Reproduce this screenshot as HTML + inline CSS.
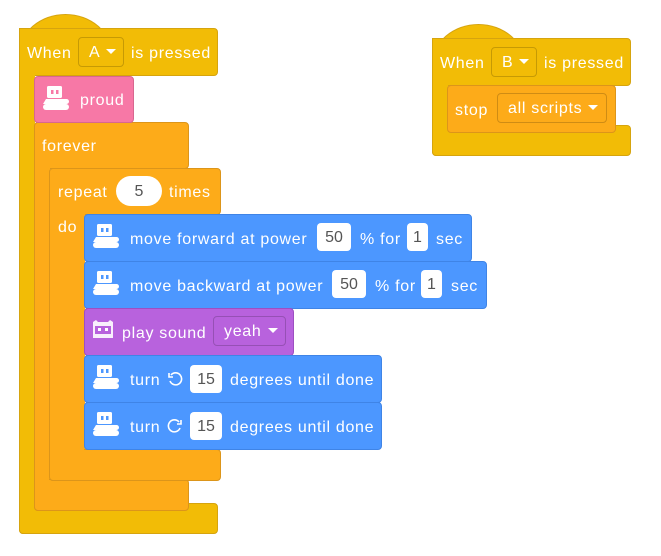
<!DOCTYPE html>
<html><head><meta charset="utf-8"><style>
body{margin:0;width:661px;height:556px;background:#fff;position:relative;overflow:hidden;font-family:"Liberation Sans",sans-serif;}
.b{position:absolute;box-sizing:border-box;border-radius:4px;color:#fff;font-size:15px;}
.y{background:#f2bc06;border:1px solid #d6a40e;}
.o{background:#fdab19;border:1px solid #dc951a;}
.bl{background:#4c97ff;border:1px solid #3f84e6;}
.pk{background:#f778a6;border:1px solid #d8678f;}
.pu{background:#b862dd;border:1px solid #9d4fc2;}
.t{position:absolute;white-space:nowrap;color:#fff;font-size:16px;letter-spacing:0.7px;line-height:18px;margin-top:2px;}
.in{position:absolute;background:#fff;border-radius:4px;color:#555;font-size:16px;text-align:center;line-height:30px;height:28px;}
.dd{position:absolute;border:1px solid rgba(0,0,0,.18);border-radius:4px;color:#fff;font-size:16px;letter-spacing:0.7px;line-height:30px;height:30px;box-sizing:border-box;padding-left:10px;white-space:nowrap;}
.ar{display:inline-block;width:0;height:0;border-left:5px solid transparent;border-right:5px solid transparent;border-top:5px solid #fff;vertical-align:middle;margin-left:6px;margin-top:-3px;}
svg.r{position:absolute;}
.dome{border-radius:50% 50% 0 0 / 100% 100% 0 0 !important;border-bottom:none;}
</style></head><body>

<!-- Hat A -->
<div class="b y dome" style="left:19px;top:14px;width:93px;height:40px"></div>
<div class="b y" style="left:19px;top:28px;width:199px;height:48px;border-top-left-radius:0"></div>
<div class="b y" style="left:19px;top:60px;width:16px;height:474px;border-radius:0 0 0 4px;border-top:none;border-right:none"></div>
<div class="b y" style="left:19px;top:503px;width:199px;height:31px;border-top-left-radius:0"></div>
<div class="b y" style="left:20px;top:30px;width:14px;height:490px;border:none;border-radius:0"></div>
<div class="t" style="left:27px;top:43px">When</div>
<div class="dd" style="left:78px;top:37px;width:46px">A<span class="ar"></span></div>
<div class="t" style="left:131px;top:43px">is pressed</div>

<!-- forever -->
<div class="b o" style="left:34px;top:122px;width:155px;height:47px"></div>
<div class="b o" style="left:34px;top:150px;width:16px;height:361px;border-radius:0 0 0 4px;border-top:none;border-right:none"></div>
<div class="b o" style="left:34px;top:479px;width:155px;height:32px;border-top-left-radius:0"></div>
<div class="b o" style="left:35px;top:140px;width:14px;height:350px;border:none;border-radius:0"></div>
<div class="t" style="left:42px;top:136px">forever</div>

<!-- proud -->
<div class="b pk" style="left:34px;top:76px;width:100px;height:47px"></div>
<svg class="r" style="left:41px;top:85px" width="30" height="28" viewBox="0 0 30 28"><rect x="6" y="1" width="15" height="12" rx="1.5" fill="#fff"/><rect x="10" y="5" width="2.5" height="4" fill="#f778a6"/><rect x="15" y="5" width="2.5" height="4" fill="#f778a6"/><path d="M5 14h17v5H2z" fill="#fff"/><rect x="2" y="19" width="26" height="6" rx="3" fill="#fff"/><rect x="14" y="14" width="14" height="5" rx="2.5" fill="#fff"/></svg>
<div class="t" style="left:80px;top:90px">proud</div>

<!-- repeat -->
<div class="b o" style="left:49px;top:168px;width:172px;height:47px"></div>
<div class="b o" style="left:49px;top:200px;width:36px;height:281px;border-radius:0 0 0 4px;border-top:none;border-right:none"></div>
<div class="b o" style="left:49px;top:449px;width:172px;height:32px;border-top-left-radius:0"></div>
<div class="b o" style="left:50px;top:205px;width:34px;height:250px;border:none;border-radius:0"></div>
<div class="t" style="left:58px;top:182px">repeat</div>
<div class="in" style="left:116px;top:176px;width:46px;height:30px;border-radius:15px;line-height:31px">5</div>
<div class="t" style="left:169px;top:182px">times</div>
<div class="t" style="left:58px;top:217px">do</div>

<!-- move forward -->
<div class="b bl" style="left:84px;top:214px;width:388px;height:48px"></div>
<svg class="r" style="left:91px;top:223px" width="30" height="28" viewBox="0 0 30 28"><rect x="6" y="1" width="15" height="12" rx="1.5" fill="#fff"/><rect x="10" y="5" width="2.5" height="4" fill="#4c97ff"/><rect x="15" y="5" width="2.5" height="4" fill="#4c97ff"/><path d="M5 14h17v5H2z" fill="#fff"/><rect x="2" y="19" width="26" height="6" rx="3" fill="#fff"/><rect x="14" y="14" width="14" height="5" rx="2.5" fill="#fff"/></svg>
<div class="t" style="left:130px;top:229px">move forward at power</div>
<div class="in" style="left:317px;top:223px;width:34px">50</div>
<div class="t" style="left:360px;top:229px">% for</div>
<div class="in" style="left:407px;top:223px;width:21px">1</div>
<div class="t" style="left:436px;top:229px">sec</div>

<!-- move backward -->
<div class="b bl" style="left:84px;top:261px;width:403px;height:48px"></div>
<svg class="r" style="left:91px;top:270px" width="30" height="28" viewBox="0 0 30 28"><rect x="6" y="1" width="15" height="12" rx="1.5" fill="#fff"/><rect x="10" y="5" width="2.5" height="4" fill="#4c97ff"/><rect x="15" y="5" width="2.5" height="4" fill="#4c97ff"/><path d="M5 14h17v5H2z" fill="#fff"/><rect x="2" y="19" width="26" height="6" rx="3" fill="#fff"/><rect x="14" y="14" width="14" height="5" rx="2.5" fill="#fff"/></svg>
<div class="t" style="left:130px;top:276px">move backward at power</div>
<div class="in" style="left:332px;top:270px;width:34px">50</div>
<div class="t" style="left:375px;top:276px">% for</div>
<div class="in" style="left:421px;top:270px;width:21px">1</div>
<div class="t" style="left:451px;top:276px">sec</div>

<!-- play sound -->
<div class="b pu" style="left:84px;top:308px;width:210px;height:48px"></div>
<svg class="r" style="left:92px;top:320px" width="22" height="20" viewBox="0 0 22 20"><path d="M1 2l3-2 2 2h10l2-2 3 2v16H1z" fill="#fff" opacity=".9"/><rect x="3" y="6" width="16" height="8" fill="#b862dd"/><rect x="6" y="8" width="3" height="3" fill="#fff"/><rect x="13" y="8" width="3" height="3" fill="#fff"/></svg>
<div class="t" style="left:122px;top:323px">play sound</div>
<div class="dd" style="left:213px;top:316px;width:73px">yeah<span class="ar"></span></div>

<!-- turn 1 -->
<div class="b bl" style="left:84px;top:355px;width:298px;height:48px"></div>
<svg class="r" style="left:91px;top:364px" width="30" height="28" viewBox="0 0 30 28"><rect x="6" y="1" width="15" height="12" rx="1.5" fill="#fff"/><rect x="10" y="5" width="2.5" height="4" fill="#4c97ff"/><rect x="15" y="5" width="2.5" height="4" fill="#4c97ff"/><path d="M5 14h17v5H2z" fill="#fff"/><rect x="2" y="19" width="26" height="6" rx="3" fill="#fff"/><rect x="14" y="14" width="14" height="5" rx="2.5" fill="#fff"/></svg>
<div class="t" style="left:130px;top:370px">turn</div>
<svg class="r" style="left:167px;top:371px" width="16" height="16" viewBox="0 0 16 16"><path d="M4 4A6 6 0 1 1 3 10" fill="none" stroke="#fff" stroke-width="1.6"/><path d="M2 2v4h4" fill="none" stroke="#fff" stroke-width="1.6"/></svg>
<div class="in" style="left:190px;top:365px;width:32px">15</div>
<div class="t" style="left:230px;top:370px">degrees until done</div>

<!-- turn 2 -->
<div class="b bl" style="left:84px;top:402px;width:298px;height:48px"></div>
<svg class="r" style="left:91px;top:411px" width="30" height="28" viewBox="0 0 30 28"><rect x="6" y="1" width="15" height="12" rx="1.5" fill="#fff"/><rect x="10" y="5" width="2.5" height="4" fill="#4c97ff"/><rect x="15" y="5" width="2.5" height="4" fill="#4c97ff"/><path d="M5 14h17v5H2z" fill="#fff"/><rect x="2" y="19" width="26" height="6" rx="3" fill="#fff"/><rect x="14" y="14" width="14" height="5" rx="2.5" fill="#fff"/></svg>
<div class="t" style="left:130px;top:417px">turn</div>
<svg class="r" style="left:167px;top:418px" width="16" height="16" viewBox="0 0 16 16"><path d="M12 4A6 6 0 1 0 13 10" fill="none" stroke="#fff" stroke-width="1.6"/><path d="M14 2v4h-4" fill="none" stroke="#fff" stroke-width="1.6"/></svg>
<div class="in" style="left:190px;top:412px;width:32px">15</div>
<div class="t" style="left:230px;top:417px">degrees until done</div>

<!-- Hat B -->
<div class="b y dome" style="left:432px;top:24px;width:93px;height:40px"></div>
<div class="b y" style="left:432px;top:38px;width:199px;height:48px;border-top-left-radius:0"></div>
<div class="b y" style="left:432px;top:70px;width:16px;height:86px;border-radius:0 0 0 4px;border-top:none;border-right:none"></div>
<div class="b y" style="left:432px;top:125px;width:199px;height:31px;border-top-left-radius:0"></div>
<div class="b y" style="left:433px;top:40px;width:14px;height:100px;border:none;border-radius:0"></div>
<div class="t" style="left:440px;top:53px">When</div>
<div class="dd" style="left:491px;top:47px;width:46px">B<span class="ar"></span></div>
<div class="t" style="left:544px;top:53px">is pressed</div>
<div class="b o" style="left:447px;top:85px;width:169px;height:48px"></div>
<div class="t" style="left:455px;top:100px">stop</div>
<div class="dd" style="left:497px;top:93px;width:110px">all scripts<span class="ar"></span></div>

</body></html>
